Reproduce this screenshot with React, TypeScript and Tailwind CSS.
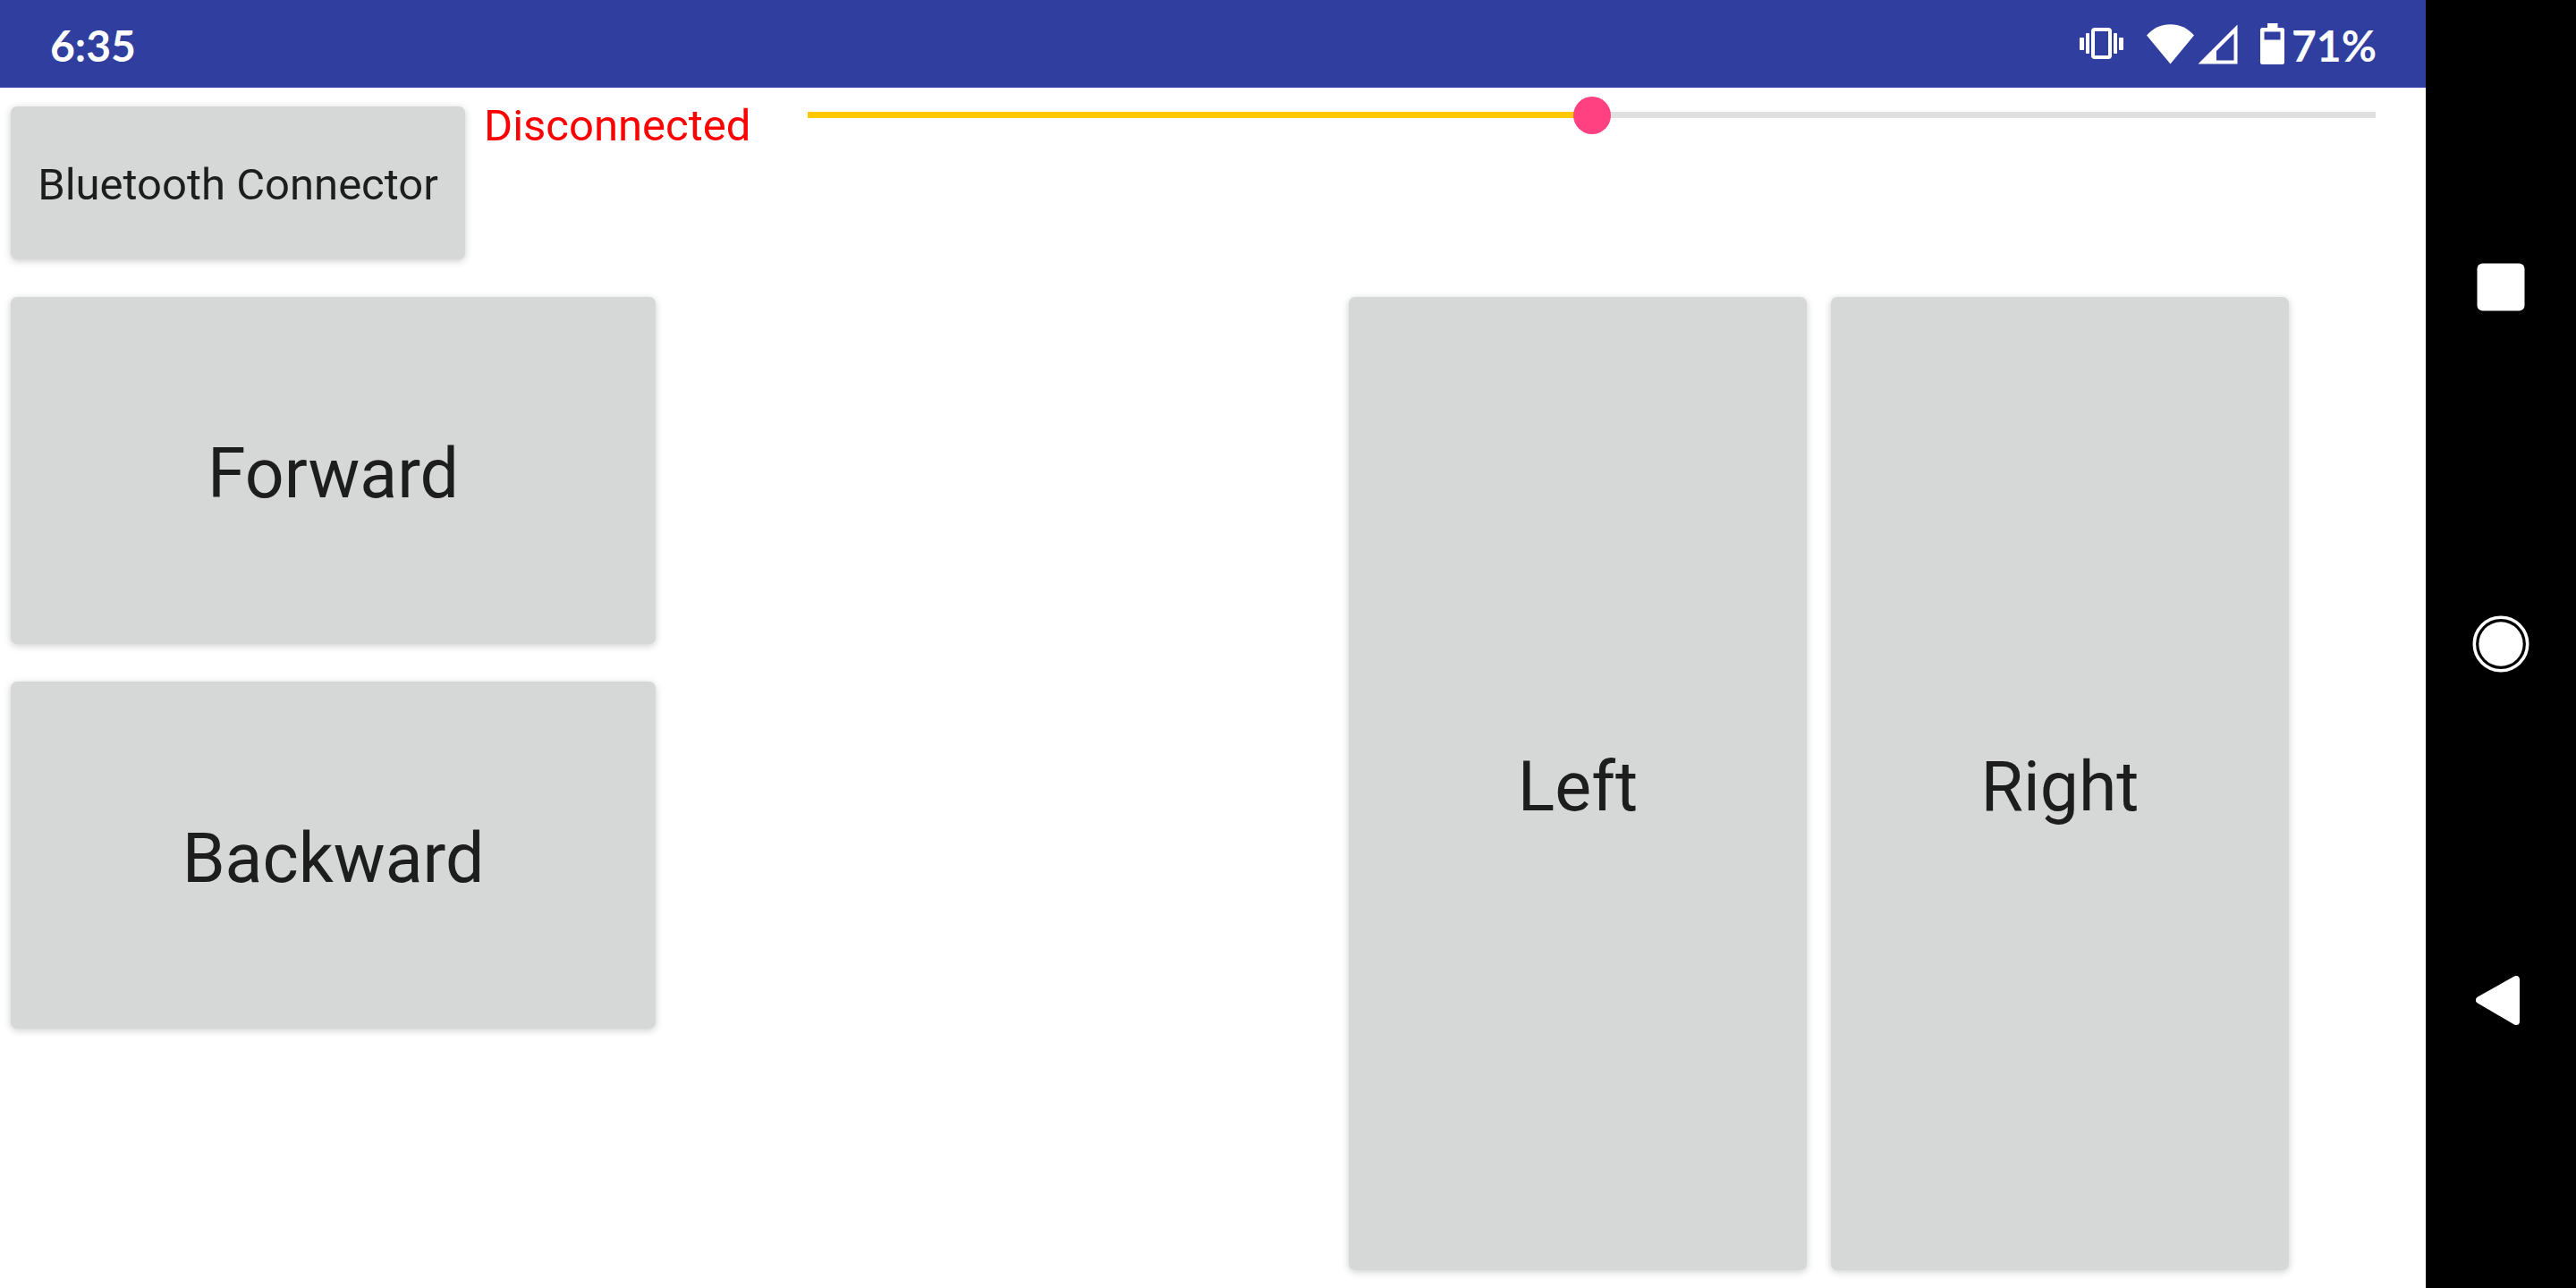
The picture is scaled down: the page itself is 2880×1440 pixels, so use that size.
import { useState } from "react";
import type { ReactNode } from "react";

function VibrateIcon() {
  return (
    <svg width="49" height="36" viewBox="0 0 49 36" fill="#fff" aria-hidden="true">
      <rect x="0" y="11" width="5" height="14" rx="1" />
      <rect x="7" y="6" width="4" height="23" rx="1" />
      <rect x="15" y="2" width="19" height="31" rx="2" fill="none" stroke="#fff" strokeWidth="4" />
      <rect x="38" y="6" width="4" height="23" rx="1" />
      <rect x="44" y="11" width="5" height="14" rx="1" />
    </svg>
  );
}

function WifiIcon() {
  return (
    <svg width="53" height="45" viewBox="0 0 53 45" fill="#fff" aria-hidden="true">
      <path d="M0 12.5C7 4.5 16.500 0.300 26.500 0.300S46 4.500 53 12.500L26.500 44.500Z" />
    </svg>
  );
}

function SignalIcon() {
  return (
    <svg width="45" height="45" viewBox="0 0 45 45" fill="#fff" aria-hidden="true">
      <path
        fillRule="evenodd"
        d="M44.500 0.500V44.500H0.500ZM40.500 10.500L21 30V40.500H40.500Z"
      />
    </svg>
  );
}

function BatteryIcon() {
  return (
    <svg width="27" height="46" viewBox="0 0 27 46" fill="#fff" aria-hidden="true">
      <path
        fillRule="evenodd"
        d="M8 0H19.500V5H24.500Q27 5 27 7.500V43.500Q27 46 24.500 46H2.500Q0 46 0 43.500V7.500Q0 5 2.500 5H8ZM4.500 9.500V18.500H22.500V9.500Z"
      />
    </svg>
  );
}

function StatusBar() {
  return (
    <header className="flex h-[98px] items-center justify-between bg-[#303f9f] pr-[55px] pl-14 font-['Lato',sans-serif] text-5xl font-bold text-white">
      <time className="pt-1">6:35</time>
      <div className="flex items-center">
        <VibrateIcon />
        <div className="ml-[26px] flex gap-1">
          <WifiIcon />
          <SignalIcon />
        </div>
        <div className="ml-[25px] flex items-center gap-2">
          <BatteryIcon />
          <span className="pt-1">71%</span>
        </div>
      </div>
    </header>
  );
}

function PadButton({ children, className }: { children: ReactNode; className: string }) {
  return (
    <button
      type="button"
      className={`rounded-[7px] bg-[#d6d8d7] text-[#1d1d1d] shadow-[0_2px_9px_rgba(0,0,0,0.2)] ${className}`}
    >
      {children}
    </button>
  );
}

function SpeedSlider() {
  const [value, setValue] = useState(50);
  return (
    <input
      type="range"
      aria-label="Speed"
      min={0}
      max={100}
      value={value}
      onChange={(e) => setValue(Number(e.target.value))}
      style={{
        ["--track" as string]: `linear-gradient(to right, #ffc800 ${value}%, #e0e0e0 ${value}%)`,
      }}
      className="mt-[10px] mr-14 ml-16 h-[41px] min-w-0 flex-1 appearance-none bg-transparent [&::-webkit-slider-runnable-track]:h-[7px] [&::-webkit-slider-runnable-track]:[background:var(--track)] [&::-webkit-slider-thumb]:mt-[-17px] [&::-webkit-slider-thumb]:size-[42px] [&::-webkit-slider-thumb]:appearance-none [&::-webkit-slider-thumb]:rounded-full [&::-webkit-slider-thumb]:bg-[#ff4081]"
    />
  );
}

function NavigationBar() {
  return (
    <nav className="flex w-[168px] shrink-0 flex-col bg-black py-[122px]">
      <button type="button" aria-label="Recent apps" className="flex flex-1 items-center justify-center">
        <svg width="54" height="54" viewBox="0 0 54 54" aria-hidden="true">
          <rect x="0.500" y="0.500" width="53" height="53" rx="6" fill="#fff" />
        </svg>
      </button>
      <button type="button" aria-label="Home" className="flex flex-1 items-center justify-center">
        <svg width="64" height="64" viewBox="0 0 64 64" aria-hidden="true">
          <circle cx="32" cy="32" r="29.700" fill="none" stroke="#fff" strokeWidth="3.600" />
          <circle cx="32" cy="32" r="24.700" fill="#fff" />
        </svg>
      </button>
      <button type="button" aria-label="Back" className="flex flex-1 items-center justify-center">
        <svg width="56" height="56" viewBox="0 0 56 56" aria-hidden="true">
          <path
            d="M4 27L45 4V51Z"
            fill="#fff"
            stroke="#fff"
            strokeWidth="8"
            strokeLinejoin="round"
          />
        </svg>
      </button>
    </nav>
  );
}

export default function App() {
  return (
    <div className="flex min-h-screen bg-white font-['Roboto',sans-serif]">
      <div className="flex min-w-0 flex-1 flex-col">
        <StatusBar />
        <main className="flex flex-1 flex-col pb-5 pl-3">
          <div className="flex items-start">
            <PadButton className="mt-[21px] h-[171px] w-[508px] pt-1 text-[49px]">
              Bluetooth Connector
            </PadButton>
            <p role="status" className="mt-[14px] ml-[21px] text-[49px] leading-[57px] text-[#ff0000]">
              Disconnected
            </p>
            <SpeedSlider />
          </div>
          <div className="mt-[42px] grid flex-1 grid-cols-[721fr_721fr_512fr_512fr] gap-x-[27px] pr-[153px] text-[77px]">
            <div className="flex flex-col gap-[42px]">
              <PadButton className="h-[388px] pt-[10px]">Forward</PadButton>
              <PadButton className="h-[388px] pt-[10px]">Backward</PadButton>
            </div>
            <PadButton className="col-start-3 pt-[10px]">Left</PadButton>
            <PadButton className="pt-[10px]">Right</PadButton>
          </div>
        </main>
      </div>
      <NavigationBar />
    </div>
  );
}
